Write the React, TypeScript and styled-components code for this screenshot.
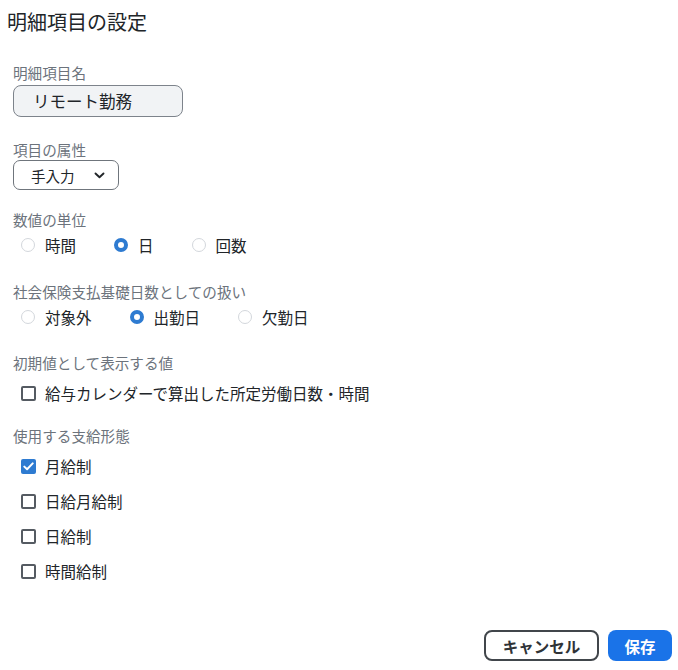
import React from "react";
import styled, { createGlobalStyle } from "styled-components";

const Global = createGlobalStyle`
  html, body { margin: 0; padding: 0; background: #ffffff; }
  body {
    font-family: "Noto Sans CJK JP", "Noto Sans", sans-serif;
    color: #212529;
    -webkit-font-smoothing: antialiased;
  }
  * { box-sizing: border-box; }
`;

const Page = styled.div`
  width: 678px;
  height: 670px;
  display: flex;
  flex-direction: column;
  padding: 8px 6px 9px 7px;
`;

const Title = styled.h1`
  margin: 0;
  font-size: 20px;
  font-weight: 400;
  line-height: 28px;
  color: #212529;
`;

const Form = styled.div`
  display: flex;
  flex-direction: column;
  padding-left: 6px;
  flex: 1;
`;

const Section = styled.section<{ $mt: number }>`
  display: flex;
  flex-direction: column;
  margin-top: ${(p) => p.$mt}px;
`;

const Label = styled.div`
  font-size: 14.6px;
  line-height: 20px;
  color: #6c737c;
`;

const TextInput = styled.div`
  margin-top: 2px;
  width: 170px;
  height: 32px;
  border: 1px solid #7d838b;
  border-radius: 8px;
  background: #f1f3f5;
  display: flex;
  align-items: center;
  padding-left: 19px;
  font-size: 16.5px;
  color: #212529;
`;

const Select = styled.div`
  width: 106px;
  height: 30px;
  border: 1px solid #6f757c;
  border-radius: 7px;
  display: flex;
  align-items: center;
  justify-content: space-between;
  padding: 0 13px 0 17px;
  font-size: 14.5px;
  color: #212529;
`;

const OptionRow = styled.div<{ $mt?: number }>`
  display: flex;
  align-items: center;
  gap: 38px;
  padding-left: 8px;
  height: 22px;
  margin-top: ${(p) => p.$mt ?? 4}px;
`;

const Option = styled.label`
  display: flex;
  align-items: center;
  gap: 10px;
  font-size: 15.5px;
  color: #212529;
  line-height: 22px;
`;

const Radio = styled.span<{ $on?: boolean }>`
  width: 14px;
  height: 14px;
  border-radius: 50%;
  flex: none;
  background: #ffffff;
  border: ${(p) => (p.$on ? "4.5px solid #2e7bd1" : "1px solid #d3d7dc")};
`;

const CheckList = styled.div`
  display: flex;
  flex-direction: column;
  gap: 13px;
  margin-top: 9px;
`;

const CheckRow = styled.label`
  display: flex;
  align-items: center;
  gap: 9px;
  padding-left: 8px;
  height: 22px;
  font-size: 15.5px;
  color: #212529;
`;

const Box = styled.span<{ $on?: boolean }>`
  width: 15px;
  height: 15px;
  flex: none;
  border-radius: 2px;
  display: flex;
  align-items: center;
  justify-content: center;
  background: ${(p) => (p.$on ? "#2e7bd1" : "#ffffff")};
  border: ${(p) => (p.$on ? "none" : "2px solid #555b62")};
`;

const Footer = styled.div`
  margin-top: auto;
  display: flex;
  justify-content: flex-end;
  gap: 9px;
`;

const Button = styled.button<{ $primary?: boolean }>`
  height: 31px;
  border-radius: 8px;
  font-family: inherit;
  font-size: 15.5px;
  font-weight: 700;
  display: flex;
  align-items: center;
  justify-content: center;
  cursor: pointer;
  padding: 0;
  width: ${(p) => (p.$primary ? "64px" : "115px")};
  background: ${(p) => (p.$primary ? "#1a73e8" : "#ffffff")};
  color: ${(p) => (p.$primary ? "#ffffff" : "#2f3337")};
  border: ${(p) => (p.$primary ? "none" : "2px solid #41464b")};
`;

const Chevron = () => (
  <svg width="11" height="7" viewBox="0 0 11 7" fill="none">
    <path d="M1.5 1.5 L5.5 5.2 L9.5 1.5" stroke="#212529" strokeWidth="1.9" strokeLinecap="round" strokeLinejoin="round" />
  </svg>
);

const Check = () => (
  <svg width="11" height="9" viewBox="0 0 11 9" fill="none">
    <path d="M1.3 4.6 L4.1 7.3 L9.7 1.4" stroke="#ffffff" strokeWidth="2" strokeLinecap="round" strokeLinejoin="round" />
  </svg>
);

const RadioGroup = ({ items, selected, mt }: { items: string[]; selected: number; mt?: number }) => (
  <OptionRow $mt={mt}>
    {items.map((t, i) => (
      <Option key={t}>
        <Radio $on={i === selected} />
        {t}
      </Option>
    ))}
  </OptionRow>
);

const CheckItem = ({ label, on }: { label: string; on?: boolean }) => (
  <CheckRow>
    <Box $on={on}>{on && <Check />}</Box>
    {label}
  </CheckRow>
);

export default function App() {
  return (
    <>
      <Global />
      <Page>
        <Title>明細項目の設定</Title>
        <Form>
          <Section $mt={27}>
            <Label>明細項目名</Label>
            <TextInput>リモート勤務</TextInput>
          </Section>
          <Section $mt={23}>
            <Label>項目の属性</Label>
            <Select>
              <span>手入力</span>
              <Chevron />
            </Select>
          </Section>
          <Section $mt={20}>
            <Label>数値の単位</Label>
            <RadioGroup items={["時間", "日", "回数"]} selected={1} />
          </Section>
          <Section $mt={26}>
            <Label>社会保険支払基礎日数としての扱い</Label>
            <RadioGroup items={["対象外", "出勤日", "欠勤日"]} selected={1} />
          </Section>
          <Section $mt={25}>
            <Label>初期値として表示する値</Label>
            <CheckList>
              <CheckItem label="給与カレンダーで算出した所定労働日数・時間" />
            </CheckList>
          </Section>
          <Section $mt={22}>
            <Label>使用する支給形態</Label>
            <CheckList>
              <CheckItem label="月給制" on />
              <CheckItem label="日給月給制" />
              <CheckItem label="日給制" />
              <CheckItem label="時間給制" />
            </CheckList>
          </Section>
          <Footer>
            <Button>キャンセル</Button>
            <Button $primary>保存</Button>
          </Footer>
        </Form>
      </Page>
    </>
  );
}
